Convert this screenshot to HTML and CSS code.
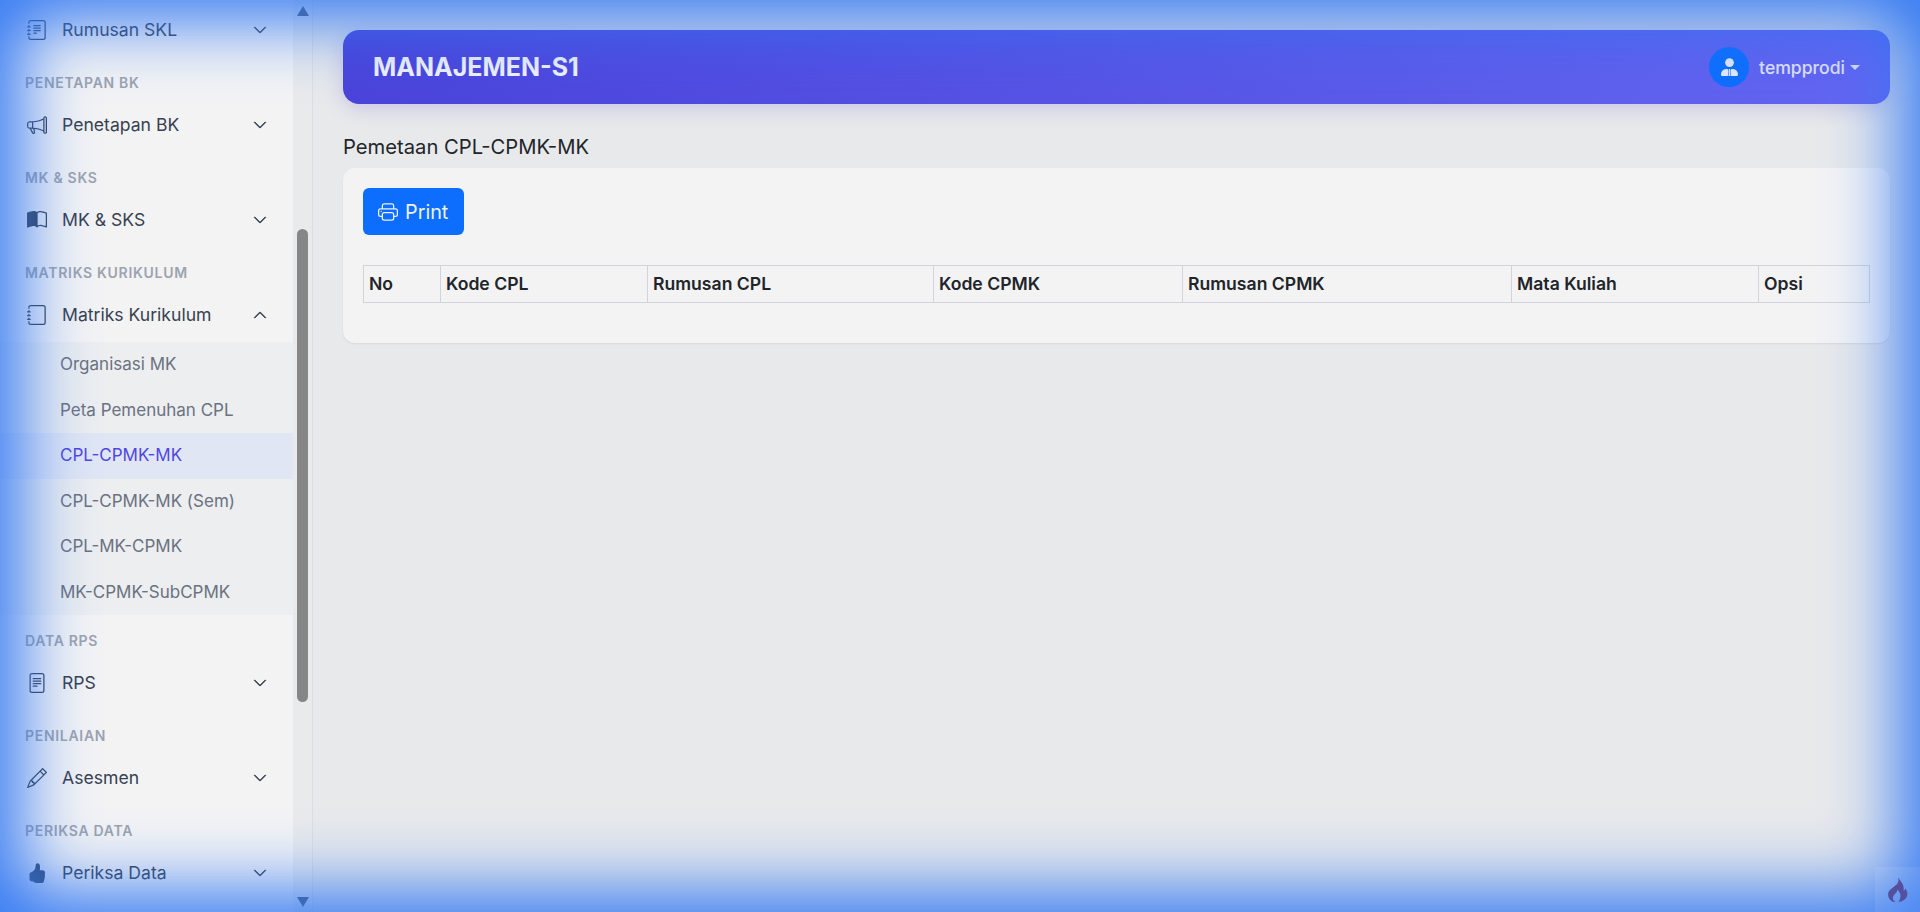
FILE: index.html
```html
<!DOCTYPE html>
<html lang="en">
<head>
    <meta charset="UTF-8">
    <meta name="viewport" content="width=device-width, initial-scale=1.0">
    <title>Pemetaan CPL-CPMK-MK</title>
    <link rel="stylesheet" href="styles.css">
</head>
<body>
    <svg class="icon-defs" xmlns="http://www.w3.org/2000/svg">
        <symbol id="i-chevron-down" viewBox="0 0 16 16"><path fill-rule="evenodd" d="M1.646 4.646a.5.5 0 0 1 .708 0L8 10.293l5.646-5.647a.5.5 0 0 1 .708.708l-6 6a.5.5 0 0 1-.708 0l-6-6a.5.5 0 0 1 0-.708z"/></symbol>
        <symbol id="i-chevron-up" viewBox="0 0 16 16"><path fill-rule="evenodd" d="M7.646 4.646a.5.5 0 0 1 .708 0l6 6a.5.5 0 0 1-.708.708L8 5.707l-5.646 5.647a.5.5 0 0 1-.708-.708l6-6z"/></symbol>
    </svg>

    <div class="layout">
        <aside class="sidebar">
            <nav class="nav">
                <a class="nav-item" href="#">
                    <svg class="nav-icon" viewBox="0 0 16 16"><path d="M5 10.5a.5.5 0 0 1 .5-.5h2a.5.5 0 0 1 0 1h-2a.5.5 0 0 1-.5-.5zm0-2a.5.5 0 0 1 .5-.5h5a.5.5 0 0 1 0 1h-5a.5.5 0 0 1-.5-.5zm0-2a.5.5 0 0 1 .5-.5h5a.5.5 0 0 1 0 1h-5a.5.5 0 0 1-.5-.5zm0-2a.5.5 0 0 1 .5-.5h5a.5.5 0 0 1 0 1h-5a.5.5 0 0 1-.5-.5z"/><path d="M3 0h10a2 2 0 0 1 2 2v12a2 2 0 0 1-2 2H3a2 2 0 0 1-2-2v-1h1v1a1 1 0 0 0 1 1h10a1 1 0 0 0 1-1V2a1 1 0 0 0-1-1H3a1 1 0 0 0-1 1v1H1V2a2 2 0 0 1 2-2z"/><path d="M1 5v-.5a.5.5 0 0 1 1 0V5h.5a.5.5 0 0 1 0 1h-2a.5.5 0 0 1 0-1H1zm0 3v-.5a.5.5 0 0 1 1 0V8h.5a.5.5 0 0 1 0 1h-2a.5.5 0 0 1 0-1H1zm0 3v-.5a.5.5 0 0 1 1 0v.5h.5a.5.5 0 0 1 0 1h-2a.5.5 0 0 1 0-1H1z"/></svg>
                    <span class="nav-text">Rumusan SKL</span>
                    <svg class="nav-chevron"><use href="#i-chevron-down"/></svg>
                </a>

                <div class="nav-label">PENETAPAN BK</div>
                <a class="nav-item" href="#">
                    <svg class="nav-icon" viewBox="0 0 16 16"><path d="M13 2.5a1.5 1.5 0 0 1 3 0v11a1.5 1.5 0 0 1-3 0v-.214c-2.162-1.241-4.49-1.843-6.912-2.083l.405 2.712A1 1 0 0 1 5.51 15.1h-.548a1 1 0 0 1-.916-.599l-1.85-3.49a68.14 68.14 0 0 0-.202-.003A2.014 2.014 0 0 1 0 9V7a2.02 2.02 0 0 1 1.992-2.013 74.663 74.663 0 0 0 2.483-.075c3.043-.154 6.148-.849 8.525-2.199V2.5zm1 0v11a.5.5 0 0 0 1 0v-11a.5.5 0 0 0-1 0zm-1 1.35c-2.344 1.205-5.209 1.842-8 2.033v4.233c.18.01.359.022.537.036 2.568.189 5.093.744 7.463 1.993V3.85zm-9 6.215v-4.13a95.09 95.09 0 0 1-1.992.052A1.02 1.02 0 0 0 1 7v2c0 .55.448 1.002 1.006 1.009A60.49 60.49 0 0 1 4 10.065zm-.657.975 1.609 3.037.01.024h.548l-.002-.014-.443-2.966a68.019 68.019 0 0 0-1.722-.082z"/></svg>
                    <span class="nav-text">Penetapan BK</span>
                    <svg class="nav-chevron"><use href="#i-chevron-down"/></svg>
                </a>

                <div class="nav-label">MK &amp; SKS</div>
                <a class="nav-item" href="#">
                    <svg class="nav-icon" viewBox="0 0 16 16"><path d="M8.5 2.687c.654-.689 1.782-.886 3.112-.752 1.234.124 2.503.523 3.388.893v9.923c-.918-.35-2.107-.692-3.287-.81-1.094-.111-2.278-.039-3.213.492V2.687zM8 1.783C7.015.936 5.587.81 4.287.94c-1.514.153-3.042.672-3.994 1.105A.5.5 0 0 0 0 2.5v11a.5.5 0 0 0 .707.455c.882-.4 2.303-.881 3.68-1.02 1.409-.142 2.59.087 3.223.877a.5.5 0 0 0 .78 0c.633-.79 1.814-1.019 3.222-.877 1.378.139 2.8.62 3.681 1.02A.5.5 0 0 0 16 13.5v-11a.5.5 0 0 0-.293-.455c-.952-.433-2.48-.952-3.994-1.105C10.413.809 8.985.936 8 1.783z"/></svg>
                    <span class="nav-text">MK &amp; SKS</span>
                    <svg class="nav-chevron"><use href="#i-chevron-down"/></svg>
                </a>

                <div class="nav-label">MATRIKS KURIKULUM</div>
                <a class="nav-item" href="#">
                    <svg class="nav-icon" viewBox="0 0 16 16"><path d="M3 0h10a2 2 0 0 1 2 2v12a2 2 0 0 1-2 2H3a2 2 0 0 1-2-2v-1h1v1a1 1 0 0 0 1 1h10a1 1 0 0 0 1-1V2a1 1 0 0 0-1-1H3a1 1 0 0 0-1 1v1H1V2a2 2 0 0 1 2-2z"/><path d="M1 5v-.5a.5.5 0 0 1 1 0V5h.5a.5.5 0 0 1 0 1h-2a.5.5 0 0 1 0-1H1zm0 3v-.5a.5.5 0 0 1 1 0V8h.5a.5.5 0 0 1 0 1h-2a.5.5 0 0 1 0-1H1zm0 3v-.5a.5.5 0 0 1 1 0v.5h.5a.5.5 0 0 1 0 1h-2a.5.5 0 0 1 0-1H1z"/></svg>
                    <span class="nav-text">Matriks Kurikulum</span>
                    <svg class="nav-chevron"><use href="#i-chevron-up"/></svg>
                </a>
                <div class="nav-sub">
                    <a class="nav-sub-item" href="#">Organisasi MK</a>
                    <a class="nav-sub-item" href="#">Peta Pemenuhan CPL</a>
                    <a class="nav-sub-item active" href="#">CPL-CPMK-MK</a>
                    <a class="nav-sub-item" href="#">CPL-CPMK-MK (Sem)</a>
                    <a class="nav-sub-item" href="#">CPL-MK-CPMK</a>
                    <a class="nav-sub-item" href="#">MK-CPMK-SubCPMK</a>
                </div>

                <div class="nav-label">DATA RPS</div>
                <a class="nav-item" href="#">
                    <svg class="nav-icon" viewBox="0 0 16 16"><path d="M5 4a.5.5 0 0 0 0 1h6a.5.5 0 0 0 0-1H5zm-.5 2.5A.5.5 0 0 1 5 6h6a.5.5 0 0 1 0 1H5a.5.5 0 0 1-.5-.5zM5 8a.5.5 0 0 0 0 1h6a.5.5 0 0 0 0-1H5zm0 2a.5.5 0 0 0 0 1h3a.5.5 0 0 0 0-1H5z"/><path d="M2 2a2 2 0 0 1 2-2h8a2 2 0 0 1 2 2v12a2 2 0 0 1-2 2H4a2 2 0 0 1-2-2V2zm10-1H4a1 1 0 0 0-1 1v12a1 1 0 0 0 1 1h8a1 1 0 0 0 1-1V2a1 1 0 0 0-1-1z"/></svg>
                    <span class="nav-text">RPS</span>
                    <svg class="nav-chevron"><use href="#i-chevron-down"/></svg>
                </a>

                <div class="nav-label">PENILAIAN</div>
                <a class="nav-item" href="#">
                    <svg class="nav-icon" viewBox="0 0 16 16"><path d="M12.146.146a.5.5 0 0 1 .708 0l3 3a.5.5 0 0 1 0 .708l-10 10a.5.5 0 0 1-.168.11l-5 2a.5.5 0 0 1-.65-.65l2-5a.5.5 0 0 1 .11-.168l10-10zM11.207 2.5 13.5 4.793 14.793 3.5 12.5 1.207 11.207 2.5zm1.586 3L10.5 3.207 4 9.707V10h.5a.5.5 0 0 1 .5.5v.5h.5a.5.5 0 0 1 .5.5v.5h.293l6.5-6.5zm-9.761 5.175-.106.106-1.528 3.821 3.821-1.528.106-.106A.5.5 0 0 1 5 12.5V12h-.5a.5.5 0 0 1-.5-.5V11h-.5a.5.5 0 0 1-.468-.325z"/></svg>
                    <span class="nav-text">Asesmen</span>
                    <svg class="nav-chevron"><use href="#i-chevron-down"/></svg>
                </a>

                <div class="nav-label">PERIKSA DATA</div>
                <a class="nav-item" href="#">
                    <svg class="nav-icon" viewBox="0 0 16 16"><path d="M6.956 1.745C7.021.81 7.908.087 8.864.325l.261.066c.463.116.874.456 1.012.965.22.816.533 2.511.062 4.51a9.84 9.84 0 0 1 .443-.051c.713-.065 1.669-.072 2.516.21.518.173.994.681 1.2 1.273.184.532.16 1.162-.234 1.733.058.119.103.242.138.363.077.27.113.567.113.856 0 .289-.036.586-.113.856-.039.135-.09.273-.16.404.169.387.107.819-.003 1.148a3.163 3.163 0 0 1-.488.901c.054.152.076.312.076.465 0 .305-.089.625-.253.912C13.1 15.522 12.437 16 11.5 16H8c-.605 0-1.07-.081-1.466-.218a4.82 4.82 0 0 1-.97-.484l-.048-.03c-.504-.307-.999-.609-2.068-.722C2.682 14.464 2 13.846 2 13V9c0-.85.685-1.432 1.357-1.615.849-.232 1.574-.787 2.132-1.41.56-.627.914-1.28 1.039-1.639.199-.575.356-1.539.428-2.59z"/></svg>
                    <span class="nav-text">Periksa Data</span>
                    <svg class="nav-chevron"><use href="#i-chevron-down"/></svg>
                </a>
            </nav>

            <div class="scrollbar">
                <span class="scroll-arrow up"></span>
                <span class="scroll-thumb"></span>
                <span class="scroll-arrow down"></span>
            </div>
        </aside>

        <main class="content">
            <header class="topbar">
                <div class="brand">MANAJEMEN-S1</div>
                <div class="user">
                    <span class="avatar">
                        <svg class="avatar-icon" viewBox="0 0 17 19"><circle cx="8.5" cy="4.6" r="4.4"/><path d="M5 11h1.600l.9 1.400-.7 5.600H1.800C.8 18 0 17.300 0 16.400 0 13.600 2.200 11.300 5 11zM12 11h-1.600l-.9 1.400.7 5.600h5C16.200 18 17 17.300 17 16.400 17 13.600 14.800 11.300 12 11zM7.700 11h1.600l-.3 1.500.5 5.500H7.500L8 12.500z"/></svg>
                    </span>
                    <span class="user-name">tempprodi</span>
                    <span class="caret"></span>
                </div>
            </header>

            <h1 class="page-title">Pemetaan CPL-CPMK-MK</h1>

            <section class="card">
                <button class="btn-print" type="button">
                    <svg class="btn-icon" viewBox="0 0 16 16"><path d="M2.500 8a.5.5 0 1 0 0-1 .5.5 0 0 0 0 1z"/><path d="M5 1a2 2 0 0 0-2 2v2H2a2 2 0 0 0-2 2v3a2 2 0 0 0 2 2h1v1a2 2 0 0 0 2 2h6a2 2 0 0 0 2-2v-1h1a2 2 0 0 0 2-2V7a2 2 0 0 0-2-2h-1V3a2 2 0 0 0-2-2H5zM4 3a1 1 0 0 1 1-1h6a1 1 0 0 1 1 1v2H4V3zm1 5a2 2 0 0 0-2 2v1H2a1 1 0 0 1-1-1V7a1 1 0 0 1 1-1h12a1 1 0 0 1 1 1v3a1 1 0 0 1-1 1h-1v-1a2 2 0 0 0-2-2H5zm7 2v3a1 1 0 0 1-1 1H5a1 1 0 0 1-1-1v-3a1 1 0 0 1 1-1h6a1 1 0 0 1 1 1z"/></svg>
                    Print
                </button>

                <table class="data-table">
                    <thead>
                        <tr>
                            <th class="col-no">No</th>
                            <th class="col-kode-cpl">Kode CPL</th>
                            <th class="col-rumusan-cpl">Rumusan CPL</th>
                            <th class="col-kode-cpmk">Kode CPMK</th>
                            <th class="col-rumusan-cpmk">Rumusan CPMK</th>
                            <th class="col-mk">Mata Kuliah</th>
                            <th>Opsi</th>
                        </tr>
                    </thead>
                </table>
            </section>
        </main>
    </div>

    <!-- blue glow round the whole window -->
    <div class="edge-glow"></div>

    <!-- debug toolbar toggle -->
    <div class="debug-toggle">
        <svg class="debug-icon" viewBox="0 0 20 25"><path d="M10 0c1 3 .6 5.200-1.400 7.400C6 10 2.500 11.500 .8 14.500c-1.600 3-.4 7 2.400 9.200C4.500 24.700 6.200 25 7.500 25c-1.700-1-2.800-2.700-2.500-4.700.3-2 2-3 3.200-4.500.7-.9 1-1.900.9-3 1.800 1.300 3.300 3.200 3.400 5.500.1 1.900-.5 4.600-1.900 6.700 3.200-.4 6.700-2 8.100-5 1.300-2.900.6-6.300-1.400-8.500-.2 1-.8 1.900-1.700 2.500.5-3.200-.2-6.500-2.300-9-1-1.300-2.100-2.700-3.300-5z"/></svg>
    </div>
</body>
</html>
```

FILE: styles.css
```css
* {
  box-sizing: border-box;
}

html, body {
  height: 100%;
}

body {
  margin: 0;
  overflow: hidden;
  font-family: Inter, "Noto Sans", sans-serif;
  font-size: 17.6px;
  color: #212529;
  background-color: #e8e9eb;
}

a {
  text-decoration: none;
}

.icon-defs {
  display: none;
}

.layout {
  display: flex;
  height: 100vh;
}

/* Sidebar */
.sidebar {
  display: flex;
  flex: 0 0 313px;
  height: 100%;
  background-color: #e9eaec;
  border-right: 1px solid #dcdee2;
}

.nav {
  flex: 0 0 293px;
  padding-top: 6px;
  background-color: #f3f3f4;
  overflow: hidden;
}

.nav-item {
  display: flex;
  align-items: center;
  height: 48px;
  padding-left: 27px;
  color: #374151;
}

.nav-icon {
  flex: 0 0 20px;
  width: 20px;
  height: 20px;
  fill: #374151;
}

.nav-text {
  flex: 1;
  margin-left: 15px;
  padding-bottom: 2px;
}

.nav-chevron {
  width: 14px;
  height: 14px;
  margin-right: 26px;
  fill: #374151;
  stroke: #374151;
  stroke-width: .8px;
}

.nav-label {
  padding: 20px 0 9px 25px;
  font-size: 14px;
  font-weight: 600;
  line-height: 18px;
  letter-spacing: .7px;
  color: #9ca3af;
}

.nav-sub {
  margin: 3px 0 -3px;
  background-color: #eceef0;
}

.nav-sub-item {
  display: flex;
  align-items: center;
  height: 45.5px;
  padding: 0 0 1px 60px;
  font-size: 17px;
  color: #6b7280;
}

.nav-sub-item.active {
  color: #4f46e5;
  background-color: #e0e6f4;
}

.scrollbar {
  display: flex;
  flex-direction: column;
  align-items: center;
  flex: 1;
}

.scroll-arrow {
  width: 0;
  height: 0;
  border-left: 6.5px solid transparent;
  border-right: 6.5px solid transparent;
}

.scroll-arrow.up {
  margin-top: 6px;
  border-bottom: 10px solid #505a66;
}

.scroll-arrow.down {
  margin-top: 195px;
  border-top: 10px solid #505a66;
}

.scroll-thumb {
  width: 11px;
  height: 473px;
  margin-top: 213px;
  border-radius: 6px;
  background-color: #868686;
}

/* Main column */
.content {
  flex: 1;
  min-width: 0;
  padding: 30px 30px 0;
}

.topbar {
  display: flex;
  align-items: center;
  justify-content: space-between;
  height: 74px;
  padding: 0 30px;
  border-radius: 16px;
  background: linear-gradient(135deg, #4a42d9, #6366f1);
  box-shadow: 0 4px 20px rgba(67, 56, 202, .2);
}

.brand {
  font-size: 25px;
  font-weight: 700;
  color: #f3f4ff;
}

.user {
  display: flex;
  align-items: center;
  color: #e4e6ff;
}

.avatar {
  display: flex;
  align-items: center;
  justify-content: center;
  width: 40px;
  height: 40px;
  border-radius: 50%;
  background-color: #0d6efd;
}

.avatar-icon {
  width: 17px;
  height: 19px;
  fill: #e8edff;
}

.user-name {
  margin-left: 10px;
  font-weight: 500;
}

.caret {
  width: 0;
  height: 0;
  margin-left: 5px;
  border-top: 5.3px solid #e4e6ff;
  border-left: 5.3px solid transparent;
  border-right: 5.3px solid transparent;
}

.page-title {
  margin: 30px 0 9px;
  font-size: 20.2px;
  font-weight: 400;
  line-height: 25px;
  color: #212529;
}

.card {
  height: 175px;
  padding: 20px;
  border-radius: 12px;
  background-color: #f3f3f4;
  box-shadow: 0 1px 2px rgba(0, 0, 0, .08);
}

.btn-print {
  display: flex;
  align-items: center;
  height: 47px;
  padding: 0 16px 0 15px;
  border: 0;
  border-radius: 6px;
  font-family: inherit;
  font-size: 19.8px;
  color: #eef2ff;
  background-color: #0d6efd;
}

.btn-icon {
  width: 20px;
  height: 20px;
  margin-right: 7px;
  fill: currentColor;
}

.data-table {
  width: 100%;
  margin-top: 30px;
  border-collapse: collapse;
  table-layout: fixed;
}

.data-table th {
  height: 37px;
  padding: 0 5px 2px;
  border: 1px solid #d1d5db;
  font-size: 17.6px;
  font-weight: 600;
  text-align: left;
  color: #212529;
}

.col-no { width: 77px; }
.col-kode-cpl { width: 207px; }
.col-rumusan-cpl { width: 286px; }
.col-kode-cpmk { width: 249px; }
.col-rumusan-cpmk { width: 329px; }
.col-mk { width: 247px; }

/* Fixed things that lie over the page */
.edge-glow {
  position: fixed;
  inset: 0;
  pointer-events: none;
  box-shadow: inset 0 0 70px 20px #3077f3;
}

.debug-toggle {
  position: fixed;
  right: 0;
  bottom: 0;
  display: flex;
  align-items: center;
  justify-content: center;
  width: 45px;
  height: 45px;
  background-color: rgba(255, 255, 255, .08);
}

.debug-icon {
  width: 20px;
  height: 25px;
  fill: #554f9f;
}
```
